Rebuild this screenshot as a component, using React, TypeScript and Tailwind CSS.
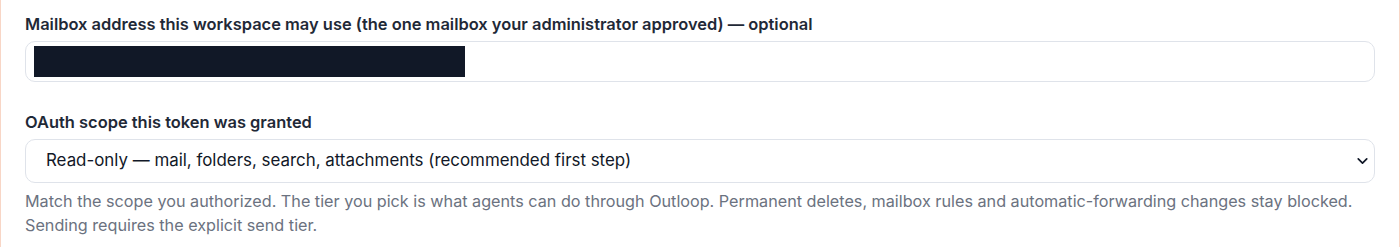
import { ChevronDown } from 'lucide-react'

export default function App() {
  return (
    <div
      className="min-h-[247px] border-x border-[#f8d6c6] bg-white px-6 pt-3 text-[#1f2937]"
      style={{ fontFamily: 'Inter, "Noto Sans", sans-serif' }}
    >
      <label className="block text-[16.45px] font-semibold leading-6">
        Mailbox address this workspace may use (the one mailbox your administrator approved) — optional
      </label>
      <div className="mt-[5px] flex h-[41px] items-center rounded-[10px] border border-[#dfe3ea] bg-white px-2">
        <div className="h-[31px] w-[431px] bg-[#111827]" />
      </div>

      <label className="mt-[28px] block text-[16.45px] font-semibold leading-6">
        OAuth scope this token was granted
      </label>
      <div className="relative mt-[5px]">
        <select className="block h-[44px] w-full appearance-none rounded-[10px] border border-[#dfe3ea] bg-white pl-5 pr-10 text-[16.9px] text-[#111827] outline-none">
          <option>Read-only — mail, folders, search, attachments (recommended first step)</option>
        </select>
        <ChevronDown
          className="pointer-events-none absolute right-[4px] top-1/2 h-[17px] w-[17px] -translate-y-1/2 text-[#111827]"
          strokeWidth={2.4}
        />
      </div>
      <p className="mt-[6px] text-[16.2px] leading-6 text-[#6b7280]">
        Match the scope you authorized. The tier you pick is what agents can do through Outloop. Permanent deletes,
        mailbox rules and automatic-forwarding changes stay blocked. Sending requires the explicit send tier.
      </p>
    </div>
  )
}
